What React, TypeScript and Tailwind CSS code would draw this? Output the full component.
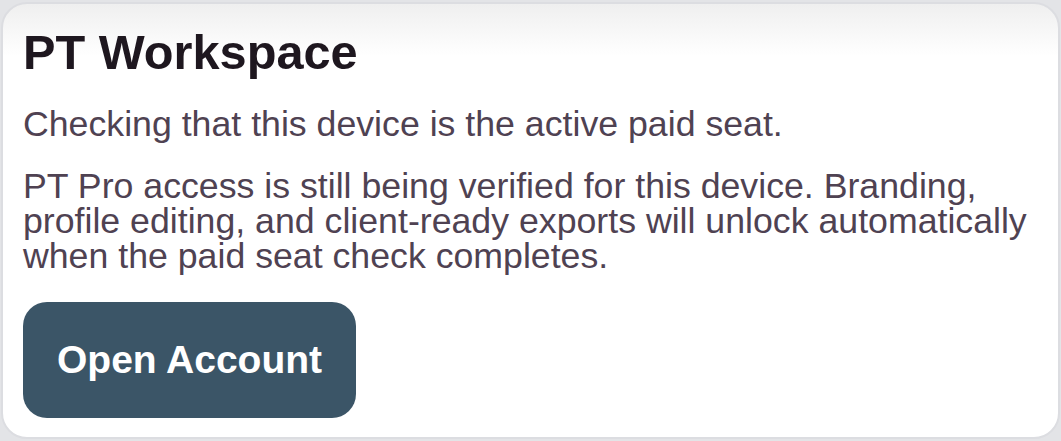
import React from 'react';

export default function App() {
  return (
    <div className="h-[441px] w-[1061px] bg-[#e3e4e7] px-[1px] pt-[2px] pb-[2px] font-['Liberation_Sans',Arial,sans-serif]">
      <div className="h-full rounded-[26px] border-2 border-[#dcdde1] bg-gradient-to-b from-[#efefef] via-white via-[12%] to-white px-[20px] pt-[19px]">
        <h1 className="text-[48.7px] font-bold leading-[1.2] text-[#1e171f]">PT Workspace</h1>
        <p className="mt-[26px] text-[35.7px] leading-[35px] text-[#4f4252]">
          Checking that this device is the active paid seat.
        </p>
        <p className="mt-[27px] text-[35.7px] leading-[35px] text-[#4f4252]">
          PT Pro access is still being verified for this device. Branding, profile editing, and client-ready exports will unlock automatically when the paid seat check completes.
        </p>
        <button className="mt-[28px] h-[116px] w-[333px] rounded-[24px] bg-[#3b5567] text-[39px] font-bold text-white">
          Open Account
        </button>
      </div>
    </div>
  );
}
